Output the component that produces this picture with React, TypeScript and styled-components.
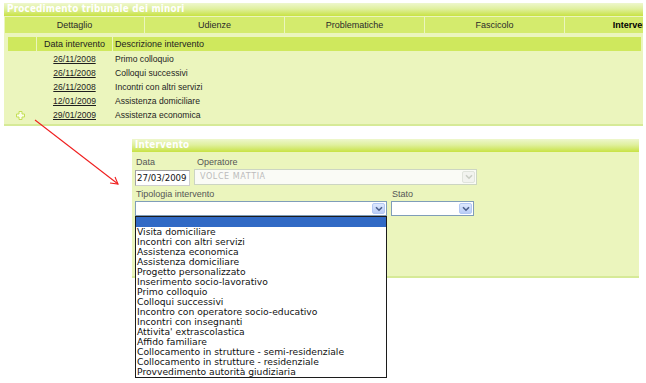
import React from 'react';
import styled, { createGlobalStyle } from 'styled-components';

const GlobalStyle = createGlobalStyle`
  html, body { margin: 0; padding: 0; background: #fff; }
  body { font-family: "Liberation Sans", Arial, sans-serif; color: #1e1e1e; }
`;

const Page = styled.div`
  position: relative;
  width: 646px;
  height: 383px;
  overflow: hidden;
  padding: 3px 3px 0 4px;
  box-sizing: border-box;
`;

const Panel = styled.section<{ $width: number; $height: number }>`
  position: relative;
  width: ${p => p.$width}px;
  height: ${p => p.$height}px;
  box-sizing: border-box;
  background: #ebf5bd;
  border-bottom: 2px solid #d6ea97;
`;

const SecondPanel = styled(Panel)`
  margin: 13px 0 0 128px;
`;

const TitleBar = styled.div`
  height: 13px;
  line-height: 13px;
  padding-left: 3px;
  background: linear-gradient(#eef7cd 0%, #e0f09e 45%, #c8e244 100%);
  color: #fff;
  font: bold 9.8px "DejaVu Sans Condensed", "DejaVu Sans", sans-serif;
  letter-spacing: 0.2px;
  white-space: nowrap;
`;

const TabRow = styled.div`
  display: flex;
  gap: 1px;
  margin: 1px 0 0 1px;
  overflow: hidden;
`;

const Tab = styled.div<{ $active?: boolean }>`
  flex: 0 0 139px;
  height: 16px;
  line-height: 16px;
  text-align: center;
  background: #d4eb6d;
  font-size: 9px;
  font-weight: ${p => (p.$active ? 'bold' : 'normal')};
  color: ${p => (p.$active ? '#000' : '#2a2a2a')};
  white-space: nowrap;
`;

const Grid = styled.div`
  display: grid;
  grid-template-columns: 28px 75px 1fr;
  column-gap: 1px;
  margin: 0 2px 0 4px;
`;

const HeadGrid = styled(Grid)`
  margin-top: 4px;
  margin-bottom: 1px;
`;

const HeadCell = styled.div<{ $center?: boolean }>`
  height: 14px;
  line-height: 14px;
  background: #cfe85d;
  font-size: 9px;
  color: #222;
  padding-left: ${p => (p.$center ? 0 : 2)}px;
  text-align: ${p => (p.$center ? 'center' : 'left')};
`;

const Cell = styled.div<{ $center?: boolean }>`
  height: 14px;
  line-height: 14px;
  font-size: 8.6px;
  color: #1e1e1e;
  padding-left: ${p => (p.$center ? 0 : 2)}px;
  text-align: ${p => (p.$center ? 'center' : 'left')};
  white-space: nowrap;
`;

const IconCell = styled.div`
  height: 14px;
  display: flex;
  align-items: center;
  padding-left: 8px;
`;

const DateLink = styled.a`
  color: #1e1e1e;
  text-decoration: underline;
`;

const Body = styled.div`
  display: flex;
  flex-direction: column;
  gap: 2px;
  padding: 4px 0 0 3px;
`;

const FieldRow = styled.div`
  display: flex;
  gap: 4px;
`;

const Field = styled.div`
  position: relative;
  display: flex;
  flex-direction: column;
`;

const Label = styled.label<{ $indent?: number }>`
  height: 12px;
  line-height: 12px;
  margin-bottom: ${p => (p.$indent === undefined ? 2 : 1)}px;
  padding-left: ${p => p.$indent ?? 1}px;
  font-size: 9px;
  color: #555;
  white-space: nowrap;
`;

const TextInput = styled.div`
  width: 55px;
  height: 16px;
  box-sizing: border-box;
  border: 1px solid #a2a2a2;
  border-right-color: #cfcfcf;
  border-bottom-color: #cfcfcf;
  background: #fff;
  padding-left: 1px;
  font: 8.6px/14px "DejaVu Sans", Verdana, sans-serif;
  color: #111;
  white-space: nowrap;
`;

const Select = styled.div<{ $width: number; $height: number; $disabled?: boolean }>`
  width: ${p => p.$width}px;
  height: ${p => p.$height}px;
  box-sizing: border-box;
  display: flex;
  border: 1px solid ${p => (p.$disabled ? '#ccd5c3' : '#7f9db9')};
  background: ${p => (p.$disabled ? '#fafbf6' : '#fff')};
  padding: 1px;
`;

const SelectValue = styled.span`
  flex: 1;
  padding-left: 4px;
  font: 8px/12px "DejaVu Sans", Verdana, sans-serif;
  letter-spacing: 0.6px;
  color: #bcbcbc;
  white-space: nowrap;
`;

const ArrowButton = styled.span<{ $disabled?: boolean }>`
  width: 13px;
  box-sizing: border-box;
  display: flex;
  align-items: center;
  justify-content: center;
  border: 1px solid ${p => (p.$disabled ? '#e0e4dc' : '#b3c8f4')};
  border-radius: 2px;
  background: ${p =>
    p.$disabled ? '#f2f3ef' : 'linear-gradient(#dde8fe, #b9cdf7)'};
`;

const ListBox = styled.ul`
  position: absolute;
  top: 100%;
  left: 0;
  z-index: 2;
  width: 252px;
  margin: 0;
  padding: 0;
  list-style: none;
  box-sizing: border-box;
  border: 1px solid #1c1c1c;
  background: #fff;
  font: 9.2px "DejaVu Sans", Verdana, sans-serif;
`;

const Option = styled.li<{ $selected?: boolean }>`
  height: 10px;
  line-height: 10px;
  padding-left: 1px;
  white-space: nowrap;
  background: ${p => (p.$selected ? '#316ac5' : 'transparent')};
  color: ${p => (p.$selected ? '#fff' : '#111')};
`;

const Annotation = styled.svg`
  position: absolute;
  top: 0;
  left: 0;
  pointer-events: none;
`;

const tabs = ['Dettaglio', 'Udienze', 'Problematiche', 'Fascicolo', 'Intervento'];

const interventi = [
  { data: '26/11/2008', desc: 'Primo colloquio' },
  { data: '26/11/2008', desc: 'Colloqui successivi' },
  { data: '26/11/2008', desc: 'Incontri con altri servizi' },
  { data: '12/01/2009', desc: 'Assistenza domiciliare' },
  { data: '29/01/2009', desc: 'Assistenza economica' },
];

const tipologie = [
  '',
  'Visita domiciliare',
  'Incontri con altri servizi',
  'Assistenza economica',
  'Assistenza domiciliare',
  'Progetto personalizzato',
  'Inserimento socio-lavorativo',
  'Primo colloquio',
  'Colloqui successivi',
  'Incontro con operatore socio-educativo',
  'Incontri con insegnanti',
  "Attivita' extrascolastica",
  'Affido familiare',
  'Collocamento in strutture - semi-residenziale',
  'Collocamento in strutture - residenziale',
  'Provvedimento autorità giudiziaria',
];

const Chevron: React.FC<{ disabled?: boolean }> = ({ disabled }) => (
  <svg width="8" height="6" viewBox="0 0 8 6">
    <path
      d="M1 1.2 L4 4.2 L7 1.2"
      fill="none"
      stroke={disabled ? '#c9cdc4' : '#4a5f8c'}
      strokeWidth="1.6"
    />
  </svg>
);

const PlusIcon = () => (
  <svg width="9" height="9" viewBox="0 0 9 9">
    <path
      d="M3 0.5 H6 V3 H8.5 V6 H6 V8.5 H3 V6 H0.5 V3 H3 Z"
      fill="#fbfde9"
      stroke="#c3df55"
      strokeWidth="1"
    />
  </svg>
);

export default function App() {
  return (
    <Page>
      <GlobalStyle />
      <Panel $width={639} $height={123}>
        <TitleBar>Procedimento tribunale dei minori</TitleBar>
        <TabRow>
          {tabs.map(t => (
            <Tab key={t} $active={t === 'Intervento'}>
              {t}
            </Tab>
          ))}
        </TabRow>
        <HeadGrid>
          <HeadCell />
          <HeadCell $center>Data intervento</HeadCell>
          <HeadCell>Descrizione intervento</HeadCell>
        </HeadGrid>
        <Grid>
          {interventi.map((r, i) => (
            <React.Fragment key={i}>
              <IconCell>{i === interventi.length - 1 && <PlusIcon />}</IconCell>
              <Cell $center>
                <DateLink>{r.data}</DateLink>
              </Cell>
              <Cell>{r.desc}</Cell>
            </React.Fragment>
          ))}
        </Grid>
      </Panel>

      <SecondPanel $width={507} $height={139}>
        <TitleBar>Intervento</TitleBar>
        <Body>
          <FieldRow>
            <Field>
              <Label>Data</Label>
              <TextInput>27/03/2009</TextInput>
            </Field>
            <Field>
              <Label $indent={3}>Operatore</Label>
              <Select $width={283} $height={16} $disabled>
                <SelectValue>VOLCE MATTIA</SelectValue>
                <ArrowButton $disabled>
                  <Chevron disabled />
                </ArrowButton>
              </Select>
            </Field>
          </FieldRow>
          <FieldRow>
            <Field>
              <Label $indent={1}>Tipologia intervento</Label>
              <Select $width={252} $height={15}>
                <SelectValue />
                <ArrowButton>
                  <Chevron />
                </ArrowButton>
              </Select>
              <ListBox>
                {tipologie.map((t, i) => (
                  <Option key={i} $selected={i === 0}>
                    {t || '\u00a0'}
                  </Option>
                ))}
              </ListBox>
            </Field>
            <Field>
              <Label $indent={1}>Stato</Label>
              <Select $width={83} $height={15}>
                <SelectValue />
                <ArrowButton>
                  <Chevron />
                </ArrowButton>
              </Select>
            </Field>
          </FieldRow>
        </Body>
      </SecondPanel>

      <Annotation width="646" height="383" viewBox="0 0 646 383">
        <g stroke="#f01e1e" strokeWidth="1.1" fill="none">
          <line x1="35" y1="120" x2="118" y2="184" />
          <polyline points="110,183 118,184 115,177" />
        </g>
      </Annotation>
    </Page>
  );
}
